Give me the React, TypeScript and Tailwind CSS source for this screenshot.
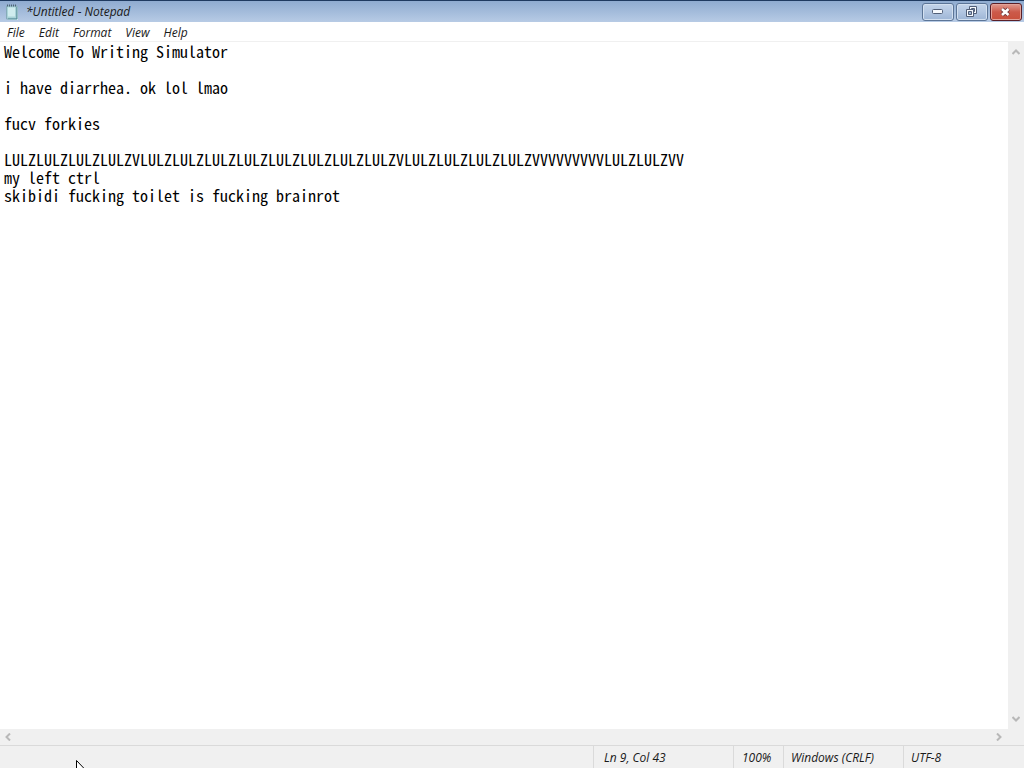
import React from "react";

const documentText = [
  "Welcome To Writing Simulator",
  "",
  "i have diarrhea. ok lol lmao",
  "",
  "fucv forkies",
  "",
  "LULZLULZLULZLULZVLULZLULZLULZLULZLULZLULZLULZLULZVLULZLULZLULZLULZVVVVVVVVVLULZLULZVV",
  "my left ctrl",
  "skibidi fucking toilet is fucking brainrot",
].join("\n");

const menus = ["File", "Edit", "Format", "View", "Help"];

function NotepadIcon() {
  return (
    <svg width="16" height="18" viewBox="0 0 16 18" aria-hidden="true">
      <path d="M2.500 3h10.500v13H2.500z" fill="#a9d3d8" stroke="#86abb9" />
      <path d="M4 4.500h7v9H4z" fill="#cfecee" />
      <path d="M13.500 4v12.500H4" fill="none" stroke="#d9f3f4" />
      <path d="M13 4v12H4" fill="none" stroke="#4f8795" />
      <path d="M3.5 1.500v2M5.500 1.500v2M7.500 1.500v2M9.500 1.500v2M11.500 1.500v2" stroke="#4d6476" />
    </svg>
  );
}

function MinimizeIcon() {
  return (
    <svg width="12" height="6" viewBox="0 0 12 6" aria-hidden="true">
      <rect x="0.5" y="0.5" width="10" height="4" rx="1" fill="#f6f9fd" stroke="#515f78" />
    </svg>
  );
}

function RestoreIcon() {
  return (
    <svg width="12" height="12" viewBox="0 0 12 12" aria-hidden="true">
      <path d="M3.5 0.5h7v7h-7z" fill="#f6f9fd" stroke="#515f78" />
      <path d="M5.5 2.5h3v3h-3z" fill="#9fb5d3" stroke="#515f78" />
      <path d="M0.5 3.5h7v7h-7z" fill="#f6f9fd" stroke="#515f78" />
      <path d="M2.5 5.5h3v3h-3z" fill="#9fb5d3" stroke="#515f78" />
    </svg>
  );
}

function CloseIcon() {
  return (
    <svg width="12" height="10" viewBox="0 0 12 10" aria-hidden="true">
      <path d="M2 2l6.500 6M8.500 2l-6.500 6" stroke="#6b3438" strokeWidth="4.400" />
      <path d="M2 2l6.500 6M8.500 2l-6.500 6" stroke="#ffffff" strokeWidth="2.600" />
    </svg>
  );
}

function Chevron({ d }: { d: string }) {
  return (
    <svg width="8" height="8" viewBox="0 0 8 8" aria-hidden="true">
      <path d={d} fill="none" stroke="#b8b8b8" strokeWidth="2" />
    </svg>
  );
}

const captionButton =
  "flex h-[18px] w-8 items-center justify-center rounded-[3px] border border-[#5c7597] bg-linear-to-b from-[#c3d4ea] via-[#b2c6e1] to-[#9db5d5] shadow-[inset_0_0_0_1px_#d3e0f0]";

export default function App() {
  return (
    <div className="flex h-screen flex-col overflow-hidden bg-white font-['Open_Sans','Noto_Sans',sans-serif] text-xs text-[#1a1a1a]">
      <header className="flex h-[22px] shrink-0 items-center border-t border-[#1f3a60] bg-linear-to-b from-[#8fabd0] to-[#b7cbe5] pr-[2px] pl-1">
        <NotepadIcon />
        <h1 className="ml-[6px] flex-1 italic">*Untitled - Notepad</h1>
        <div className="flex gap-[2px]">
          <button type="button" aria-label="Minimize" className={captionButton}>
            <MinimizeIcon />
          </button>
          <button type="button" aria-label="Restore" className={captionButton}>
            <RestoreIcon />
          </button>
          <button
            type="button"
            aria-label="Close"
            className="flex h-[18px] w-8 items-center justify-center rounded-[3px] border border-[#5a1f27] bg-linear-to-b from-[#df9a90] via-[#cc5a4a] to-[#c9503c] shadow-[inset_0_0_0_1px_#e3a399]"
          >
            <CloseIcon />
          </button>
        </div>
      </header>

      <nav className="flex h-5 shrink-0 items-center gap-[14px] border-b border-[#f0f0f0] px-[7px] pt-[2px]">
        {menus.map((menu) => (
          <button key={menu} type="button" className="italic">
            {menu}
          </button>
        ))}
      </nav>

      <main className="grid min-h-0 flex-1 grid-cols-[1fr_16px] grid-rows-[1fr_16px] bg-[#f0f0f0]">
        <textarea
          aria-label="Document"
          defaultValue={documentText}
          spellCheck={false}
          wrap="off"
          className="resize-none overflow-hidden bg-white px-1 font-['Noto_Sans_Mono_CJK_SC','Liberation_Mono',monospace] text-base leading-[18px] text-black outline-none"
        />
        <div className="flex flex-col items-center justify-between py-[6px]">
          <button type="button" aria-label="Scroll up">
            <Chevron d="M0.5 6L4 2.5L7.5 6" />
          </button>
          <button type="button" aria-label="Scroll down">
            <Chevron d="M0.5 2L4 5.5L7.5 2" />
          </button>
        </div>
        <div className="flex items-center justify-between pr-[5px] pl-1">
          <button type="button" aria-label="Scroll left">
            <Chevron d="M6 0.5L2.5 4L6 7.5" />
          </button>
          <button type="button" aria-label="Scroll right">
            <Chevron d="M2 0.5L5.5 4L2 7.5" />
          </button>
        </div>
      </main>

      <footer className="relative flex h-[23px] shrink-0 items-stretch border-t border-[#dadada] bg-[#f0f0f0] leading-6 italic">
        <div className="flex-1" />
        <div className="w-[140px] border-l border-[#dadada] pl-[10px]">Ln 9, Col 43</div>
        <div className="w-[50px] border-l border-[#dadada] pl-2">100%</div>
        <div className="w-[120px] border-l border-[#dadada] pl-[7px]">Windows (CRLF)</div>
        <div className="w-[121px] border-l border-[#dadada] pl-[7px]">UTF-8</div>
        <svg
          width="12"
          height="19"
          viewBox="0 0 12 19"
          aria-hidden="true"
          className="absolute top-[14px] left-[76px]"
        >
          <path
            d="M0.5 0.5v15l3.5-3.5l2.5 6l2-1l-2.5-5.500h5z"
            fill="#ffffff"
            stroke="#000000"
          />
        </svg>
      </footer>
    </div>
  );
}
